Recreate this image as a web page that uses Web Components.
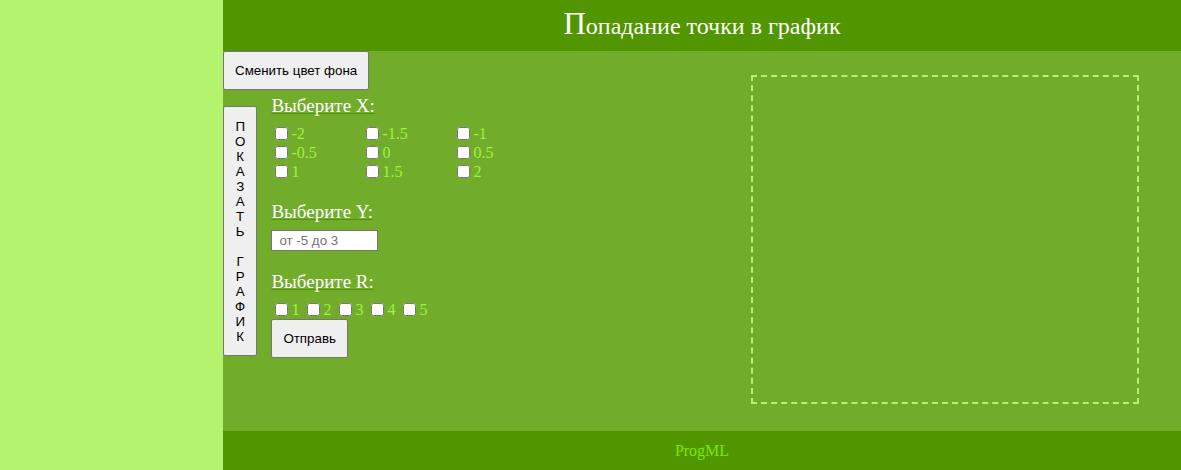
<!DOCTYPE html>
<html lang="ru">
<head>
<meta charset="utf-8">
<title>Попадание точки в график</title>
<style>
  html, body { margin: 0; min-height: 100%; }
  body {
    --dark: #519600; --mid: #71ad2b; --lime: #9df33e; --pale: #b4f36d; --vivid: #7ce700;
    background: var(--pale);
    font: 16px/18px "Liberation Serif", serif;
  }
</style>
</head>
<body>
<graph-page></graph-page>
<script>
  const define = (name, html) => customElements.define(name, class extends HTMLElement {
    constructor() {
      super();
      const t = document.createElement('template');
      t.innerHTML = html;
      this.attachShadow({ mode: 'open' }).append(t.content.cloneNode(true));
    }
  });

  define('page-header', `
    <style>
      :host { display: block; background: var(--dark); color: #fff; text-align: center; }
      h1 { margin: 0; padding: 6px 0 7px; font-size: 24px; font-weight: 400; line-height: 35px; }
      h1::first-letter { font-size: 31px; }
    </style>
    <h1><slot></slot></h1>`);

  define('page-footer', `
    <style>
      :host { display: block; background: var(--dark); color: var(--vivid); text-align: center; padding: 11px 0 10px; }
    </style>
    <slot></slot>`);

  define('push-button', `
    <style>
      :host { display: block; }
      button {
        display: block; padding: 11px; border: 1px solid #767676; border-radius: 2px;
        background: #efefef; color: #000; font-family: "Liberation Sans", sans-serif; line-height: 15px;
      }
      :host([tall]) button { padding-top: 12px; }
    </style>
    <button type="button"><slot></slot></button>`);

  define('field-group', `
    <style>
      :host { display: block; }
      h2 {
        margin: 0 0 7px; font-size: 19px; font-weight: 400; line-height: 22px; color: #fff;
        text-decoration: underline 1px var(--dark); text-decoration-skip-ink: none;
      }
    </style>
    <h2><slot name="title"></slot></h2>
    <slot></slot>`);

  define('check-option', `
    <style>
      :host { display: block; color: var(--lime); }
      label { display: flex; }
      input { width: 13px; height: 13px; margin: 2px 3px 2px 4px; }
    </style>
    <label><input type="checkbox"><slot></slot></label>`);

  define('y-input', `
    <style>
      :host { display: block; }
      input {
        display: block; box-sizing: border-box; width: 107px; height: 21px; padding: 1px 7px;
        border: 1px solid #767676; background: #fff; font-family: "Liberation Sans", sans-serif;
      }
      input::placeholder { color: #757575; }
    </style>
    <input type="text" aria-label="Выберите Y" placeholder="от -5 до 3">`);

  define('point-form', `
    <style>
      :host { display: block; }
      form { display: grid; gap: 20px; }
      .x { display: grid; grid-template-columns: repeat(3, 91px); row-gap: 1px; padding-top: 1px; }
      .r { display: flex; gap: 4px; padding-top: 1px; }
    </style>
    <form>
      <field-group><span slot="title">Выберите X:</span>
        <div class="x">
          <check-option>-2</check-option><check-option>-1.5</check-option><check-option>-1</check-option>
          <check-option>-0.5</check-option><check-option>0</check-option><check-option>0.5</check-option>
          <check-option>1</check-option><check-option>1.5</check-option><check-option>2</check-option>
        </div>
      </field-group>
      <field-group><span slot="title">Выберите Y:</span><y-input></y-input></field-group>
      <field-group><span slot="title">Выберите R:</span>
        <div class="r">
          <check-option>1</check-option><check-option>2</check-option><check-option>3</check-option><check-option>4</check-option><check-option>5</check-option>
        </div>
        <push-button>Отправь</push-button>
      </field-group>
    </form>`);

  define('graph-area', `
    <style>
      :host { display: block; box-sizing: border-box; border: 2px dashed var(--pale); }
    </style>`);

  define('graph-page', `
    <style>
      :host { display: grid; grid-template-columns: 223px 1fr; min-height: 100vh; }
      .content { grid-column: 2; display: flex; flex-direction: column; background: var(--mid); }
      main { flex: 1; display: flex; justify-content: space-between; }
      .tools { display: flex; gap: 14px; padding-top: 5px; }
      .side { margin-top: 11px; }
      graph-area { width: 388px; margin: 24px 42px 27px 0; }
    </style>
    <div class="content">
      <page-header>Попадание точки в график</page-header>
      <main>
        <div>
          <push-button>Сменить цвет фона</push-button>
          <div class="tools">
            <push-button class="side" tall>П<br>О<br>К<br>А<br>З<br>А<br>Т<br>Ь<br><br>Г<br>Р<br>А<br>Ф<br>И<br>К</push-button>
            <point-form></point-form>
          </div>
        </div>
        <graph-area></graph-area>
      </main>
      <page-footer>ProgML</page-footer>
    </div>`);
</script>
</body>
</html>
